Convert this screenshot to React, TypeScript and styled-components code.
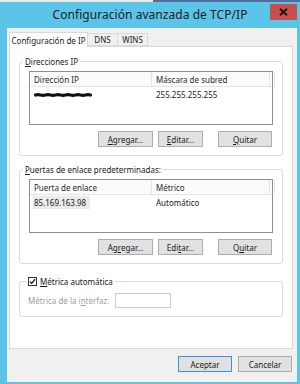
import React from "react";
import styled, { createGlobalStyle } from "styled-components";

const GlobalStyle = createGlobalStyle`
  html, body {
    margin: 0;
    padding: 0;
    background: #5ac5e9;
  }
  body {
    font-family: "Noto Sans", "Open Sans", sans-serif;
    font-size: 8px;
    color: #1a1a1a;
  }
`;

type Column = { title: string; width: number };

const ipColumns: Column[] = [
  { title: "Dirección IP", width: 122 },
  { title: "Máscara de subred", width: 118 },
];

const gatewayColumns: Column[] = [
  { title: "Puerta de enlace", width: 122 },
  { title: "Métrico", width: 118 },
];

const Window = styled.div`
  width: 300px;
  height: 384px;
  background: #5ac5e9;
  display: flex;
  flex-direction: column;
  box-sizing: border-box;
`;

const TopStrip = styled.div`
  height: 2px;
  background: linear-gradient(
    to right,
    #ececec 0,
    #ececec 153px,
    #6b6b6b 153px,
    #6b6b6b 157px,
    #4f6f9c 157px
  );
`;

const TitleBar = styled.div`
  height: 26px;
  display: grid;
  grid-template-columns: 1fr auto 1fr;
  align-items: center;
`;

const Title = styled.div`
  grid-column: 2;
  font-size: 12px;
  color: #202020;
  letter-spacing: 0.05px;
  padding-bottom: 2px;
`;

const CloseButton = styled.div`
  grid-column: 3;
  justify-self: end;
  align-self: start;
  margin: 2px 3px 0 0;
  width: 27px;
  height: 16px;
  background: #c7504c;
  display: flex;
  align-items: center;
  justify-content: center;
`;

const Body = styled.div`
  flex: 1;
  margin: 0 3px 2px 7px;
  background: #f0f0f0;
  display: flex;
  flex-direction: column;
`;

const TabRow = styled.div`
  display: flex;
  align-items: flex-end;
  padding: 3px 0 0 2px;
  height: 15px;
`;

const Tab = styled.div<{ $active?: boolean; $w: number }>`
  width: ${(p) => p.$w}px;
  height: ${(p) => (p.$active ? 15 : 13)}px;
  display: flex;
  align-items: center;
  justify-content: center;
  box-sizing: border-box;
  background: ${(p) => (p.$active ? "#ffffff" : "#f0f0f0")};
  border: 1px solid #d9d9d9;
  border-bottom: ${(p) => (p.$active ? "none" : "1px solid #d9d9d9")};
  margin-left: ${(p) => (p.$active ? 0 : -1)}px;
  position: relative;
  z-index: ${(p) => (p.$active ? 2 : 1)};
  margin-bottom: ${(p) => (p.$active ? -1 : 0)}px;
  font-size: 8px;
`;

const Panel = styled.div`
  margin: 0 4px 0 2px;
  height: 303px;
  background: #ffffff;
  border: 1px solid #d9d9d9;
  box-sizing: border-box;
  padding: 9px 9px 0 9px;
  display: flex;
  flex-direction: column;
  gap: 5px;
`;

const Group = styled.fieldset<{ $gap?: number }>`
  margin: 0 0 ${(p) => p.$gap ?? 0}px 0;
  padding: 4px 9px 8px 9px;
  border: 1px solid #dcdcdc;
  border-radius: 3px;
  min-width: 0;
  display: flex;
  flex-direction: column;
`;

const Legend = styled.legend<{ $shift: number }>`
  padding: 0 2px;
  margin-left: ${(p) => p.$shift}px;
  font-size: 8px;
  color: #1a1a1a;
  display: flex;
  align-items: center;
  gap: 3px;
`;

const Key = styled.span`
  text-decoration: underline;
  text-underline-offset: 1px;
`;

const ListBox = styled.div`
  height: 54px;
  border: 1px solid #8e8f8f;
  background: #ffffff;
  box-sizing: border-box;
  display: flex;
  flex-direction: column;
`;

const HeaderRow = styled.div`
  display: flex;
  height: 14px;
  border-bottom: 1px solid #e5e5e5;
  background: #fbfbfb;
`;

const HeaderCell = styled.div<{ $w: number }>`
  width: ${(p) => p.$w}px;
  flex: none;
  box-sizing: border-box;
  padding-left: 4px;
  border-right: 1px solid #e5e5e5;
  display: flex;
  align-items: center;
  color: #2a2a2a;
`;

const Row = styled.div`
  display: flex;
  height: 13px;
  align-items: center;
  margin-top: 1px;
`;

const Cell = styled.div<{ $w: number }>`
  width: ${(p) => p.$w}px;
  flex: none;
  box-sizing: border-box;
  padding-left: 4px;
  height: 100%;
  display: flex;
  align-items: center;
`;

const SelectedText = styled.span`
  background: #ebebeb;
  margin-left: -1px;
  padding: 1px;
  width: 55px;
`;

const Redacted = styled.svg`
  display: block;
  margin-top: 1px;
`;

const ButtonRow = styled.div`
  display: flex;
  justify-content: flex-end;
  margin-top: 6px;
  padding-right: 1px;
`;

const Button = styled.div<{ $w: number; $gap?: number; $default?: boolean }>`
  width: ${(p) => p.$w}px;
  height: 16px;
  margin-left: ${(p) => p.$gap ?? 0}px;
  box-sizing: border-box;
  background: #e1e1e1;
  border: 1px solid ${(p) => (p.$default ? "#3c8fdc" : "#adadad")};
  display: flex;
  align-items: center;
  justify-content: center;
  color: #1a1a1a;
  font-size: 8px;
`;

const MetricRow = styled.div`
  display: flex;
  align-items: center;
  gap: 6px;
  padding: 2px 0 0 0;
  margin-left: -1px;
`;

const DisabledLabel = styled.span`
  color: #a0a0a0;
`;

const TextBox = styled.div`
  width: 56px;
  height: 15px;
  box-sizing: border-box;
  border: 1px solid #cccccc;
  background: #ffffff;
`;

const CheckBox = styled.span`
  width: 9px;
  height: 9px;
  box-sizing: border-box;
  border: 1px solid #333333;
  background: #ffffff;
  display: flex;
  align-items: center;
  justify-content: center;
`;

const Footer = styled.div`
  display: flex;
  justify-content: flex-end;
  padding: 7px 5px 0 0;
`;

const Check = () => (
  <svg width="9" height="9" viewBox="0 0 9 9">
    <path d="M1.2 4.6 L3.4 6.8 L7.8 1.6" fill="none" stroke="#111" strokeWidth="1.6" />
  </svg>
);

const CloseIcon = () => (
  <svg width="9" height="8" viewBox="0 0 9 8">
    <path d="M1 0.8 L8 7.2 M8 0.8 L1 7.2" stroke="#1a1a1a" strokeWidth="2" />
  </svg>
);

// black scribble used to hide the address in the screenshot
const Scribble = () => (
  <Redacted width="58" height="6" viewBox="0 0 58 6">
    <path
      d="M1.5 3 Q4 2.3 6.5 3 T11.5 3 T16.5 3 T21.5 3 T26.5 3 T31.5 3 T36.5 3 T41.5 3 T46.5 3 T51.5 3 T56.5 3"
      fill="none"
      stroke="#111"
      strokeWidth="3.2"
      strokeLinecap="round"
    />
  </Redacted>
);

const Header = ({ columns }: { columns: Column[] }) => (
  <HeaderRow>
    {columns.map((c) => (
      <HeaderCell key={c.title} $w={c.width}>
        {c.title}
      </HeaderCell>
    ))}
    <HeaderCell $w={4} />
  </HeaderRow>
);

type Btn = { pre: string; key: string; post: string; w: number; gap: number };

const ipButtons: Btn[] = [
  { pre: "", key: "A", post: "gregar...", w: 55, gap: 0 },
  { pre: "", key: "E", post: "ditar...", w: 45, gap: 5 },
  { pre: "", key: "Q", post: "uitar", w: 54, gap: 15 },
];

const gwButtons: Btn[] = [
  { pre: "Ag", key: "r", post: "egar...", w: 55, gap: 0 },
  { pre: "Edi", key: "t", post: "ar...", w: 45, gap: 5 },
  { pre: "Q", key: "u", post: "itar", w: 54, gap: 15 },
];

const Buttons = ({ items }: { items: Btn[] }) => (
  <ButtonRow>
    {items.map((b) => (
      <Button key={b.pre + b.key + b.post} $w={b.w} $gap={b.gap}>
        {b.pre}
        <Key>{b.key}</Key>
        {b.post}
      </Button>
    ))}
  </ButtonRow>
);

const App: React.FC = () => {
  return (
    <>
      <GlobalStyle />
      <Window>
        <TopStrip />
        <TitleBar>
          <Title>Configuración avanzada de TCP/IP</Title>
          <CloseButton>
            <CloseIcon />
          </CloseButton>
        </TitleBar>
        <Body>
          <TabRow>
            <Tab $active $w={79}>
              Configuración de IP
            </Tab>
            <Tab $w={31}>DNS</Tab>
            <Tab $w={31}>WINS</Tab>
          </TabRow>
          <Panel>
            <Group $gap={3}>
              <Legend $shift={-6}>
                <span>
                  <Key>D</Key>irecciones IP
                </span>
              </Legend>
              <ListBox>
                <Header columns={ipColumns} />
                <Row>
                  <Cell $w={122}>
                    <Scribble />
                  </Cell>
                  <Cell $w={118}>255.255.255.255</Cell>
                </Row>
              </ListBox>
              <Buttons items={ipButtons} />
            </Group>
            <Group $gap={7}>
              <Legend $shift={-6}>
                <span>
                  <Key>P</Key>uertas de enlace predeterminadas:
                </span>
              </Legend>
              <ListBox>
                <Header columns={gatewayColumns} />
                <Row>
                  <Cell $w={122}>
                    <SelectedText>85.169.163.98</SelectedText>
                  </Cell>
                  <Cell $w={118}>Automático</Cell>
                </Row>
              </ListBox>
              <Buttons items={gwButtons} />
            </Group>
            <Group>
              <Legend $shift={-3}>
                <CheckBox>
                  <Check />
                </CheckBox>
                <span>
                  <Key>M</Key>étrica automática
                </span>
              </Legend>
              <MetricRow>
                <DisabledLabel>
                  Métrica de la i<Key>n</Key>terfaz:
                </DisabledLabel>
                <TextBox />
              </MetricRow>
            </Group>
          </Panel>
          <Footer>
            <Button $w={54} $default>
              Aceptar
            </Button>
            <Button $w={54} $gap={6}>
              Cancelar
            </Button>
          </Footer>
        </Body>
      </Window>
    </>
  );
};

export default App;
